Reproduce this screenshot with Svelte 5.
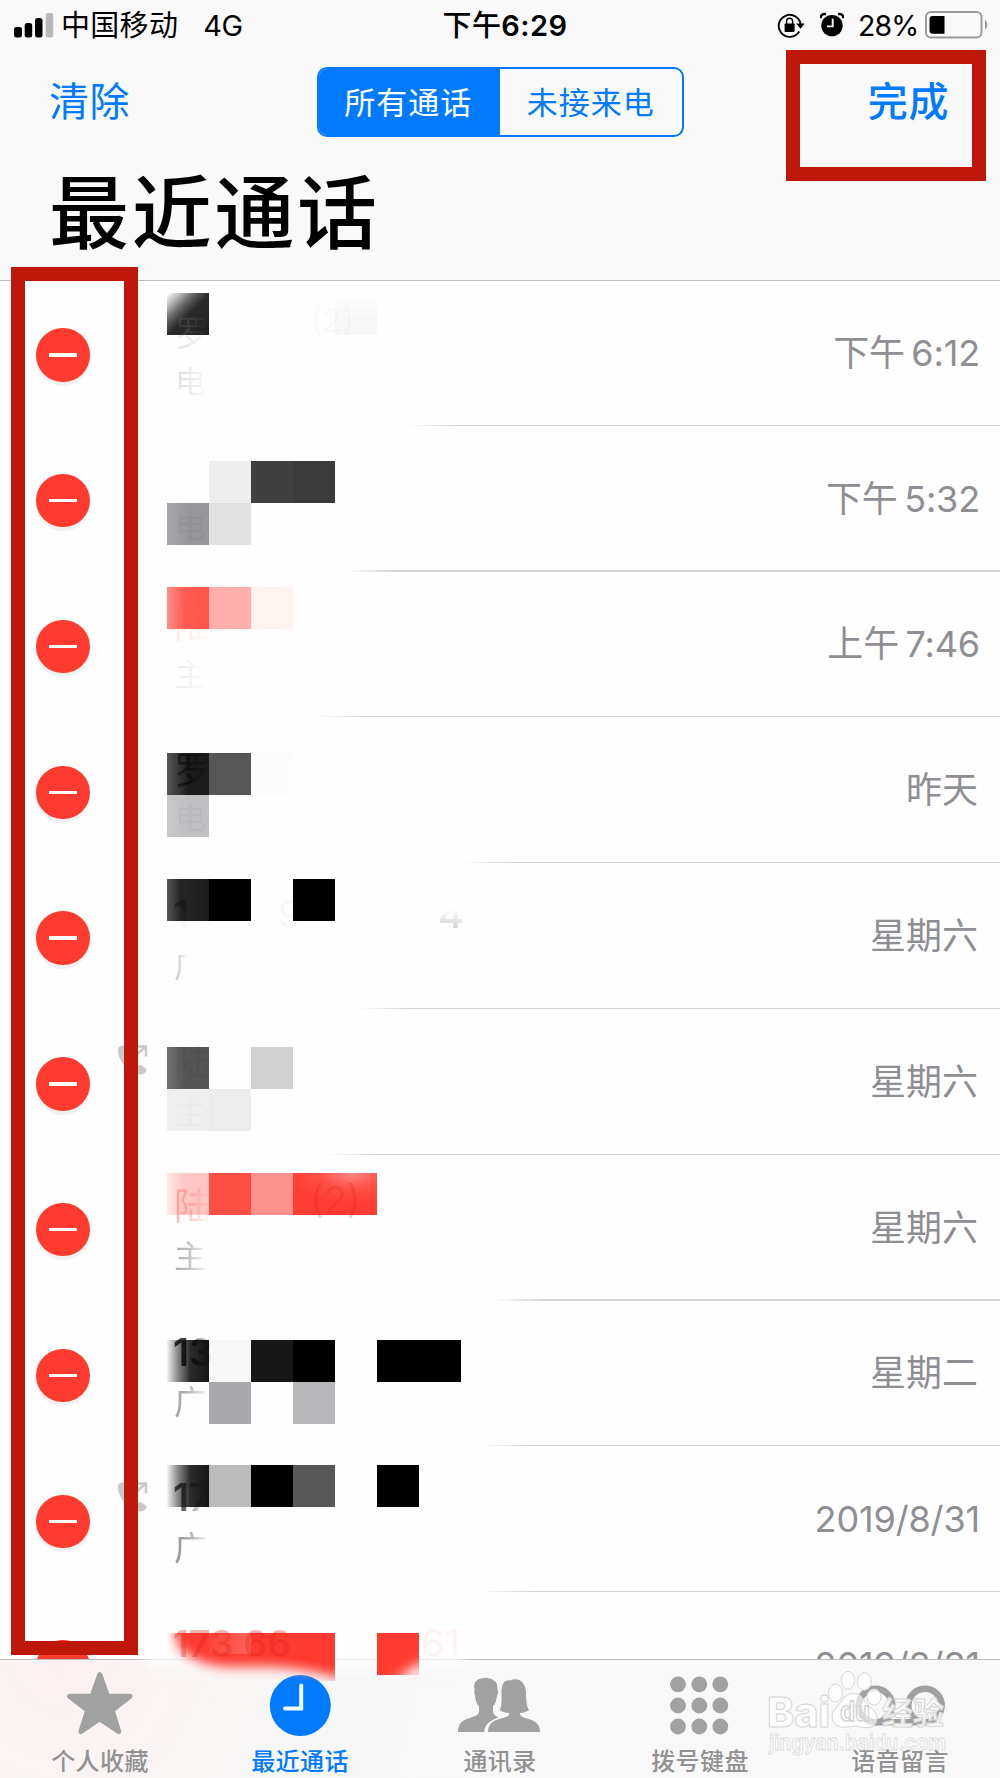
<script>
  const PITCH = 145.8;
  const TOP = 280;
  const CELL = 41.87;

  // Each block: [column, line, span, fill]; columns and lines count mosaic cells.
  // fade: where the separator under the row starts to show.
  const calls = [
    { time: '下午 6:12', fade: 405, blocks: [[4, 7, 1, 'url(#corner)'], [8, 7, 1, 'url(#mist)']],
      marks: [{ t: '罗', x: 175, y: 346, s: 35, o: 0.18, f: 'url(#fadeText)' }, { t: '电', x: 175, y: 393, s: 31, o: 0.22, f: 'url(#fadeText)' }, { t: '(2)', x: 310, y: 332, s: 33, o: 0.014 }] },
    { time: '下午 5:32', fade: 345, blocks: [[5, 11, 1, '#eeeeee'], [6, 11, 1, '#404040'], [7, 11, 1, '#3b3b3b'], [4, 12, 1, 'url(#slate)'], [5, 12, 1, '#e1e1e1']],
      marks: [{ t: '电', x: 175, y: 538, s: 31, o: 0.035 }] },
    { time: '上午 7:46', fade: 315, blocks: [[4, 14, 1, 'url(#coral)'], [5, 14, 1, '#ffaeab'], [6, 14, 1, '#fff3f2']],
      marks: [{ t: '陆', x: 174, y: 638, s: 37, c: '#ff2a1e', o: 0.12, f: 'url(#fadeRed)' }, { t: '主', x: 175, y: 686, s: 31, f: 'url(#fadeText)', o: 0.12 }] },
    { time: '昨天', fade: 460, blocks: [[4, 18, 1, 'url(#coal)'], [5, 18, 1, '#575757'], [6, 18, 1, '#fcfcfc'], [4, 19, 1, 'url(#silver)']],
      marks: [{ t: '罗', x: 174, y: 784, s: 37, o: 0.45, f: 'url(#fadeInk)' }, { t: '电', x: 175, y: 829, s: 31, o: 0.03 }] },
    { time: '星期六', fade: 358, blocks: [[4, 21, 1, 'url(#graphite)'], [5, 21, 1, '#000'], [7, 21, 1, '#000']],
      marks: [{ t: '1', x: 173, y: 928, s: 38, o: 0.3, w: 600, f: 'url(#sink)' }, { t: '9', x: 278, y: 928, s: 38, o: 0.025 }, { t: '4', x: 438, y: 928, s: 38, o: 0.16, f: 'url(#rise)', w: 600 }, { t: '广', x: 174, y: 977, s: 32, f: 'url(#fadeStem)', o: 0.55 }] },
    { time: '星期六', fade: 325, outgoing: true, blocks: [[4, 25, 1, 'url(#ash)'], [6, 25, 1, '#d2d2d2'], [4, 26, 1, '#efefef'], [5, 26, 1, '#ececec']],
      marks: [{ t: '陆', x: 174, y: 1076, s: 36, o: 0.035 }, { t: '主', x: 175, y: 1124, s: 31, o: 0.015 }] },
    { time: '星期六', fade: 495, blocks: [[4, 28, 1, 'url(#blush)'], [5, 28, 1, '#ff4f45'], [6, 28, 1, '#ff918c'], [7, 28, 2, 'url(#flame)']],
      marks: [{ t: '陆', x: 174, y: 1220, s: 37, o: 0.38, f: 'url(#fadeRed)' }, { t: '(2)', x: 310, y: 1214, s: 38, c: '#e22219', o: 0.25 }, { t: '主', x: 174, y: 1268, s: 32, o: 0.6, f: 'url(#fadeText)' }] },
    { time: '星期二', fade: 478, blocks: [[4, 32, 1, 'url(#dusk)'], [5, 32, 1, '#f7f7f7'], [6, 32, 1, '#181818'], [7, 32, 1, '#000'], [9, 32, 2, '#000'], [5, 33, 1, '#a9a8ad'], [7, 33, 1, '#b8b8ba']],
      marks: [{ t: '13', x: 173, y: 1366, s: 38, o: 0.75, w: 600, f: 'url(#fadeInk)' }, { t: '广', x: 174, y: 1414, s: 33, o: 0.7, f: 'url(#fadeText)' }] },
    { time: '2019/8/31', fade: 482, outgoing: true, blocks: [[4, 35, 1, 'url(#dusk)'], [5, 35, 1, '#bbbbbb'], [6, 35, 1, '#000'], [7, 35, 1, '#585858'], [9, 35, 1, '#000']],
      marks: [{ t: '17', x: 173, y: 1511, s: 38, o: 0.65, w: 600, f: 'url(#fadeStemInk)' }, { t: '广', x: 174, y: 1560, s: 33, o: 0.8, f: 'url(#fadeText)' }] },
    { time: '2019/8/31', fade: 475, blocks: [], marks: [] },
  ];
  const tabs = ['个人收藏', '最近通话', '通讯录', '拨号键盘', '语音留言'];
</script>

<div class="screen">
  <svg class="defs" width="0" height="0" aria-hidden="true">
    <defs>
      <linearGradient id="corner" x1="0" y1="0" x2="1" y2="1"><stop offset="0" stop-color="#fff" /><stop offset=".15" stop-color="#bdbdbd" /><stop offset=".32" stop-color="#666" /><stop offset=".5" stop-color="#2b2b2b" /><stop offset="1" stop-color="#202020" /></linearGradient>
      <linearGradient id="mist" x1="0" y1="0" x2="0" y2="1"><stop offset="0" stop-color="#fff" /><stop offset=".6" stop-color="#f7f7f7" /></linearGradient>
      <linearGradient id="slate"><stop offset="0" stop-color="#a8a8ac" /><stop offset=".5" stop-color="#97969b" /></linearGradient>
      <linearGradient id="coral"><stop offset="0" stop-color="#ff8c86" /><stop offset=".4" stop-color="#ff5c53" /><stop offset="1" stop-color="#ff544a" /></linearGradient>
      <linearGradient id="coal"><stop offset="0" stop-color="#555" /><stop offset=".5" stop-color="#1c1c1c" /></linearGradient>
      <linearGradient id="silver"><stop offset="0" stop-color="#c9c9cb" /><stop offset=".5" stop-color="#bfbfc1" /></linearGradient>
      <linearGradient id="graphite"><stop offset="0" stop-color="#555" /><stop offset=".3" stop-color="#262626" /><stop offset="1" stop-color="#1c1c1c" /></linearGradient>
      <linearGradient id="ash"><stop offset="0" stop-color="#707070" /><stop offset=".4" stop-color="#555" /></linearGradient>
      <linearGradient id="blush"><stop offset="0" stop-color="#ffe9e8" /><stop offset=".4" stop-color="#ffc6c3" /></linearGradient>
      <radialGradient id="flame" cx=".7" cy="0" r=".75"><stop offset="0" stop-color="#ff8b85" /><stop offset=".5" stop-color="#ff5148" /><stop offset="1" stop-color="#ff3d32" /></radialGradient>
      <linearGradient id="dusk"><stop offset="0" stop-color="#eee" /><stop offset=".25" stop-color="#888" /><stop offset=".55" stop-color="#2a2a2a" /><stop offset="1" stop-color="#161616" /></linearGradient>
      <linearGradient id="fadeText" gradientUnits="userSpaceOnUse" x1="174" x2="210" y1="0" y2="0"><stop offset="0" stop-color="#77777c" /><stop offset=".4" stop-color="#999" /><stop offset="1" stop-color="#999" stop-opacity="0" /></linearGradient>
      <linearGradient id="fadeStem" gradientUnits="userSpaceOnUse" x1="174" x2="188" y1="0" y2="0"><stop offset="0" stop-color="#88888c" /><stop offset="1" stop-color="#999" stop-opacity="0" /></linearGradient>
      <linearGradient id="fadeRed" gradientUnits="userSpaceOnUse" x1="176" x2="212" y1="0" y2="0"><stop offset="0" stop-color="#ff5148" /><stop offset=".3" stop-color="#ff5148" stop-opacity=".8" /><stop offset="1" stop-color="#ff5148" stop-opacity="0" /></linearGradient>
      <linearGradient id="fadeInk" gradientUnits="userSpaceOnUse" x1="176" x2="212" y1="0" y2="0"><stop offset="0" stop-color="#000" /><stop offset=".3" stop-color="#000" /><stop offset="1" stop-color="#000" stop-opacity="0" /></linearGradient>
      <linearGradient id="fadeStemInk" gradientUnits="userSpaceOnUse" x1="182" x2="204" y1="0" y2="0"><stop offset="0" stop-color="#000" /><stop offset="1" stop-color="#000" stop-opacity="0" /></linearGradient>
      <linearGradient id="rise" x1="0" y1="0" x2="0" y2="1"><stop offset=".4" stop-color="#000" stop-opacity="0" /><stop offset=".8" stop-color="#000" /></linearGradient>
      <linearGradient id="sink" x1="0" y1="0" x2="0" y2="1"><stop offset=".3" stop-color="#000" /><stop offset=".65" stop-color="#000" stop-opacity=".1" /></linearGradient>
    </defs>
  </svg>

  <header>
    <div class="status">
      <div class="left">
        <svg width="40" height="26" viewBox="0 0 40 26">
          <rect x="0" y="15" width="8" height="10.5" rx="2.5" /><rect x="10.7" y="11" width="7.5" height="14.5" rx="2.5" />
          <rect x="21" y="6" width="7.5" height="19.5" rx="2.5" /><rect x="31.7" y="1" width="7.5" height="24.5" rx="2.5" fill="#b9b9b9" />
        </svg>
        <span class="carrier">中国移动</span><span class="net">4G</span>
      </div>
      <div class="clock"><span>下午</span>6:29</div>
      <div class="right">
        <svg width="28" height="26" viewBox="0 0 28 26">
          <path d="M22.2 19.5A11 11 0 1 1 23.7 13" fill="none" stroke="#000" stroke-width="1.9" />
          <path d="M19.2 11.5h8.6l-4.3 5.2z" />
          <rect x="7.6" y="11.5" width="10" height="8.5" rx=".8" />
          <path d="M9.6 12V9.3a3 3 0 0 1 6 0V12" fill="none" stroke="#000" stroke-width="1.4" />
        </svg>
        <svg class="alarm" width="24" height="26" viewBox="0 0 24 26">
          <circle cx="12" cy="13.6" r="10.7" />
          <path d="M.8 6.1C.5 3.4 2.2 1.5 5.9 2.1M23.2 6.1C23.5 3.4 21.8 1.5 18.1 2.1" fill="none" stroke="#000" stroke-width="2.4" />
          <path d="M12.7 6.8V14.4H7" fill="none" stroke="#f9f9f9" stroke-width="1.9" />
        </svg>
        <span class="percent">28%</span>
        <svg width="64" height="28" viewBox="0 0 64 28">
          <rect x="1" y="1" width="55.5" height="25.5" rx="5" fill="none" stroke="#999" stroke-width="2" />
          <path d="M7.5 5H19.5V22.8H7.5a3 3 0 0 1-3-3V8a3 3 0 0 1 3-3z" /><path d="M60 8.5q5 5 0 10.5z" fill="#999" />
        </svg>
      </div>
    </div>
    <nav>
      <button class="link">清除</button>
      <div class="segments"><span class="on">所有通话</span><span>未接来电</span></div>
      <button class="link done">完成</button>
    </nav>
    <h1>最近通话</h1>
  </header>

  <main>
    {#each calls as call, i}
      <div class="row">
        <div class="remove"><i></i></div>
        <svg class="entry" width="400" height={PITCH} viewBox={`110 ${TOP + PITCH * i} 400 ${PITCH}`}>
          {#if call.outgoing}
            <g transform={`translate(118 ${TOP + PITCH * i + 36})`} fill="#c9c9c9">
              <path d="M0 5C0 1 3 0 7 .5L9 7 6.5 10.5C9 15.5 13 19.5 18.5 22.5L22 19.5 28.5 24C29 27 26 29.5 22 29.5 10 27 0 16 0 5Z" />
              <path d="M14 14 27 2M18 1.5H28V11.5" fill="none" stroke="#c9c9c9" stroke-width="2.5" />
            </g>
          {/if}
          {#each call.blocks as [c, l, n, fill]}
            <rect x={c * CELL} y={l * CELL + 0.2} width={n * CELL} height={CELL} {fill} shape-rendering="crispEdges" />
          {/each}
          {#each call.marks as m}
            <text x={m.x} y={m.y} font-size={m.s} font-weight={m.w ?? 400} fill={m.f ?? m.c ?? '#000'} opacity={m.o}>{m.t}</text>
          {/each}
        </svg>
        <time class:word={!/\d/.test(call.time)}>{call.time}</time>
        <hr style:left={`${call.fade}px`} />
      </div>
    {/each}
  </main>

  <footer>
    {#each tabs as tab, i}
      <div class="tab" class:active={i === 1}>
        <svg width="200" height="80" viewBox="0 0 200 80">
          {#if i === 0}
            <path d="M99.8 14.5 107.6 36.3H130L112.2 50.3 118.7 71.5 99.8 58.8 81 71.5 87.6 50.3 69.5 36.3H92Z" stroke="#a1a1a1" stroke-width="5" stroke-linejoin="round" />
          {:else if i === 1}
            <circle cx="100.3" cy="45.5" r="30.5" /><path d="M101.2 25.5V48.5H85" fill="none" stroke="#f5f8fc" stroke-width="4" stroke-linecap="round" />
          {:else if i === 2}
            <path d="M58 72C58 63 63 60 71 57.5 77 55.8 79 54 79 51.5V46C76 44 75.5 39 75 35 74 34 74.2 31 74.7 29.5 73 22 77 19.5 81 18.5 88 16 98 19.5 97.5 28V30C98.6 31 98 34 97 35.5 96.5 40 95.5 44 93 46V51C93 54 95 56 98.5 57.5 89 61 84.5 65 84.3 72Z" />
            <path d="M88 72C88 64 93 60.5 101 58.5 107 57 109.5 56 109 53 106 53 102.5 52 99.7 50.3 102 46 101.5 39 101.5 32 101.5 24 105 19.5 110 20.5 117 17 125.5 20.5 126 32 126 40 126.5 46 129 50 126.5 52 123 52.8 120 53 119.5 56 122 57 127 58.5 135.5 61 140 64 140 72Z" />
          {:else if i === 3}
            {#each [24.3, 45.5, 66.5] as y}{#each [78, 99.3, 120.3] as x}<circle cx={x} cy={y} r="7.9" />{/each}{/each}
          {:else}
            <g fill="none" stroke="#a1a1a1" stroke-width="6.5"><circle cx="75.5" cy="45.5" r="16.7" /><circle cx="125" cy="45.5" r="16.7" /><path d="M75.5 62.3H125" /></g>
          {/if}
        </svg>
        <span>{tab}</span>
      </div>
    {/each}
  </footer>

  <svg class="smudge" width="400" height="90" viewBox="110 1600 400 90">
    <defs>
      <filter id="soft" x="-20%" y="-40%" width="140%" height="180%"><feGaussianBlur stdDeviation="6" /></filter>
      <linearGradient id="pale"><stop offset="0" stop-color="#ff4a40" /><stop offset="1" stop-color="#ff7069" /></linearGradient>
      <clipPath id="cells"><path d="M167.5 1633H335V1681H167.5ZM377 1633H419V1675H377Z" /></clipPath>
    </defs>
    <rect x="145" y="1640" width="320" height="30" fill="#fff" opacity=".7" filter="url(#soft)" />
    <g clip-path="url(#cells)">
      <path d="M172 1610H345V1680Q300 1665 240 1667 195 1668 178 1646Z" fill="#ff3b30" filter="url(#soft)" />
      <path d="M209.3 1633H251.2V1654H209.3Z" fill="url(#pale)" opacity=".75" />
      <path d="M251.2 1633H335V1666Q300 1658 251.2 1656Z" fill="#ff3b30" />
      <path d="M377 1633H419V1675H377Z" fill="#ff3b30" />
      <path d="M425 1660V1682H392Z" fill="#fff" filter="url(#soft)" />
    </g>
    <text x="173" y="1657" font-size="37.5" font-weight="600" fill="#e2271c" opacity=".35">173 66</text>
    <text x="421" y="1657" font-size="38" fill="#ff3b30" opacity=".05">61</text>
  </svg>

  <svg class="watermark" width="200" height="105" viewBox="760 1665 200 105">
    <g fill="#fff" fill-opacity=".82" stroke="#d6d6d6" stroke-width="1">
      <ellipse cx="835.5" cy="1693" rx="7" ry="9" /><ellipse cx="848" cy="1680.3" rx="6.7" ry="9" />
      <ellipse cx="864.3" cy="1681.5" rx="7" ry="8.7" /><ellipse cx="874" cy="1697" rx="7" ry="8" />
      <path fill-opacity=".65" d="M844 1698C850 1691 860 1692 864 1700 868 1707 877 1710 877 1718 877 1727 869 1729 861 1727 853 1725 848 1728 840 1727 831 1724 830 1714 835 1709Z" />
      <text x="767" y="1726.5" font-size="41" font-weight="800" textLength="63" lengthAdjust="spacingAndGlyphs">Bai</text>
      <text x="840" y="1721" font-size="27" font-weight="700" textLength="30" lengthAdjust="spacingAndGlyphs" fill-opacity=".3" stroke="#d2d2d2" stroke-width="1.4">du</text>
      <text x="882" y="1724" font-size="31" font-weight="700">经验</text>
      <text x="769" y="1749.5" font-size="21" font-weight="600" textLength="177" lengthAdjust="spacingAndGlyphs" stroke-width=".8" stroke="#dadada">jingyan.baidu.com</text>
    </g>
  </svg>

  <div class="frame frame-done"></div>
  <div class="frame frame-list"></div>
</div>

<style>
  :global(body) { background: #fefefe; }
  .screen { position: relative; width: 1000px; height: 1778px; overflow: hidden; background: #fefefe; font-family: Inter, 'Noto Sans CJK SC', sans-serif; display: flex; flex-direction: column; color: #000; }
  .defs { position: absolute; }
  svg { display: block; flex: none; }
  header { box-sizing: border-box; height: 281px; flex: none; background: #f9f9f9; border-bottom: 1px solid #bebebe; }
  .status { height: 50px; display: grid; grid-template-columns: 442.5px 1fr auto; align-items: center; font-size: 29px; line-height: 52px; }
  .left, .right { display: flex; align-items: center; }
  .left { padding-left: 14px; }
  .left svg, .right svg { margin-top: -3px; }
  .carrier { margin-left: 7px; letter-spacing: .3px; }
  .net { margin-left: 25px; letter-spacing: -.5px; }
  .clock { font-weight: 600; font-size: 29px; letter-spacing: .4px; white-space: nowrap; }
  .clock span { font-weight: 500; }
  .right { padding-right: 11px; }
  .alarm { margin-left: 15px; }
  .percent { margin: 0 8px 0 14px; width: 59px; letter-spacing: -.9px; font-size: 28.5px; }
  nav { display: grid; grid-template-columns: 267.5px 367px 1fr; align-items: center; height: 104px; padding: 0 51px 0 49px; }
  .link { font: inherit; font-size: 40px; letter-spacing: .6px; color: #007aff; background: none; border: 0; padding: 0; text-align: left; line-height: 60px; }
  .done { text-align: right; font-weight: 500; }
  .segments { box-sizing: border-box; height: 70px; display: grid; grid-template-columns: 1fr 1fr; border: 2px solid #007aff; border-radius: 10px; overflow: hidden; color: #007aff; font-size: 31px; letter-spacing: 1px; line-height: 67px; text-align: center; }
  .on { background: #007aff; color: #fff; margin-left: -2px; }
  h1 { margin: 0; padding-left: 49px; font-size: 80px; line-height: 118px; font-weight: 500; letter-spacing: 2.7px; }
  main { height: 1379px; flex: none; overflow: hidden; margin-top: -1px; }
  .row { position: relative; height: 145.8px; display: grid; grid-template-columns: 110px 400px 1fr; padding-right: 20px; align-items: center; }
  .remove { width: 53.5px; height: 53.5px; margin: 4px 0 0 36px; border-radius: 50%; background: #ff3b30; box-shadow: 0 4px 1px #f1f1f1; display: grid; place-items: center; }
  .remove i { width: 28px; height: 3.5px; background: #fff; }
  time { justify-self: end; font-size: 36px; line-height: 44px; color: #8e8e93; letter-spacing: -.15px; word-spacing: -3.5px; white-space: nowrap; }
  .word { margin-right: 2px; letter-spacing: 0; }
  hr { position: absolute; right: 0; bottom: 0; margin: 0; border: 0; height: 1.2px; background: linear-gradient(90deg, transparent, #d3d3d5 50px); }
  .entry { overflow: hidden; }
  footer { box-sizing: border-box; height: 119px; flex: none; display: grid; grid-template-columns: repeat(5, 200px); background: radial-gradient(circle at 60px 0, #fbf1f0, #f8f7f7 240px, #f8f8f8 500px); border-top: 1px solid #bdbdbd; }
  .tab { fill: #a1a1a1; color: #929292; display: flex; flex-direction: column; align-items: center; }
  .tab span { font-size: 24px; letter-spacing: .4px; line-height: 36px; margin-top: 4px; font-weight: 500; }
  .active { fill: #007aff; color: #007aff; }
  .smudge { position: absolute; left: 110px; top: 1600px; }
  .watermark { position: absolute; left: 760px; top: 1665px; }
  .frame { position: absolute; box-sizing: border-box; border: 14.5px solid #bd180a; }
  .frame-done { left: 785.5px; top: 50px; width: 200.5px; height: 131px; }
  .frame-list { left: 11px; top: 267px; width: 127px; height: 1387.5px; }
</style>
